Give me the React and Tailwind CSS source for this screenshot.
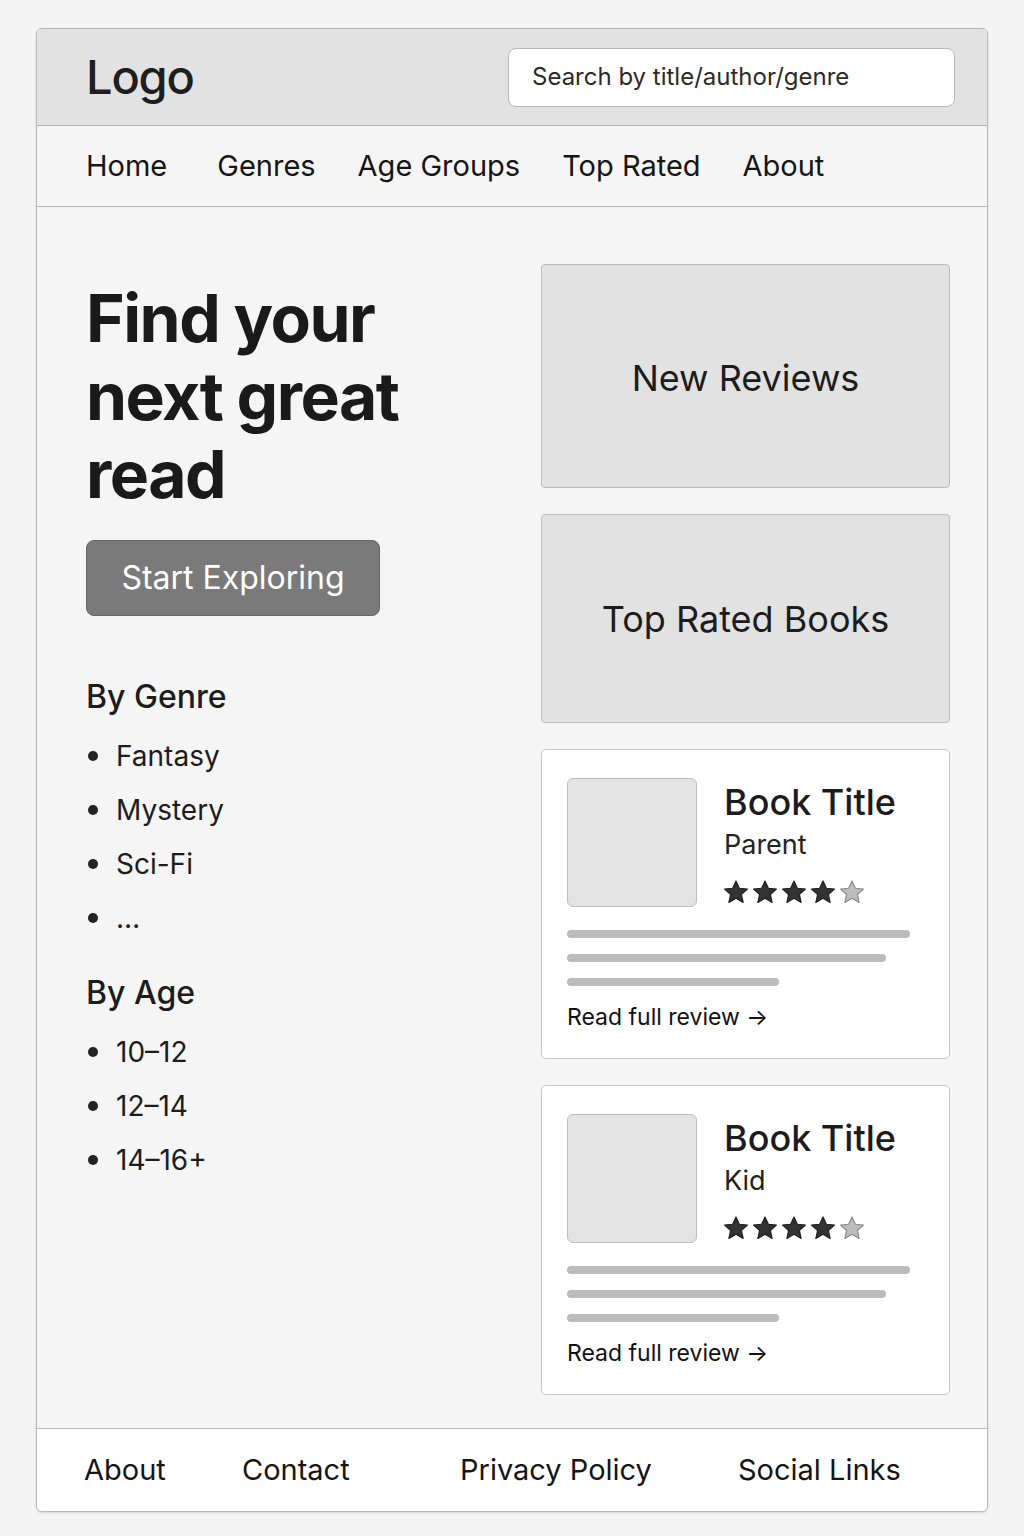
import React from 'react';

const navLinks = ['Home', 'Genres', 'Age Groups', 'Top Rated', 'About'];
const genres = ['Fantasy', 'Mystery', 'Sci-Fi', '…'];
const ages = ['10–12', '12–14', '14–16+'];
const reviews = [
  { title: 'Book Title', by: 'Parent', rating: 4 },
  { title: 'Book Title', by: 'Kid', rating: 4 },
];

const Star = ({ filled }) => (
  <svg viewBox="0 0 24 24" className="w-[28px] h-[28px]">
    <path
      d="M12 2.5l2.9 6.3 6.9.7-5.2 4.6 1.5 6.8L12 17.4l-6.1 3.5 1.5-6.8-5.2-4.6 6.9-.7z"
      fill={filled ? '#333333' : '#bdbdbd'}
      stroke={filled ? '#1f1f1f' : '#8a8a8a'}
      strokeWidth="1"
      strokeLinejoin="round"
    />
  </svg>
);

const ReviewCard = ({ review }) => (
  <div className="bg-white border border-[#c4c4c4] rounded-[5px] pt-[28px] pb-[26px] px-[25px]">
    <div className="flex">
      <div className="w-[130px] h-[129px] bg-[#e3e3e3] border border-[#bdbdbd] rounded-[6px] shrink-0" />
      <div className="ml-[27px] pt-[1px]">
        <p className="text-[36px] leading-[46px] font-medium text-[#1c1c1c]">{review.title}</p>
        <p className="text-[27px] leading-[36px] text-[#222] mt-[2px]">{review.by}</p>
        <div className="flex gap-[1px] mt-[15px] -ml-[2px]">
          {[0, 1, 2, 3, 4].map((i) => (
            <Star key={i} filled={i < review.rating} />
          ))}
        </div>
      </div>
    </div>
    {/* text placeholder lines */}
    <div className="mt-[23px] flex flex-col gap-[16px]">
      <div className="h-[8px] w-[343px] bg-[#bcbcbc] rounded-full" />
      <div className="h-[8px] w-[319px] bg-[#bcbcbc] rounded-full" />
      <div className="h-[8px] w-[212px] bg-[#bcbcbc] rounded-full" />
    </div>
    <p className="mt-[16px] text-[23px] leading-[30px] text-[#111]">Read full review →</p>
  </div>
);

const BulletList = ({ items }) => (
  <ul className="mt-[10px] flex flex-col">
    {items.map((item) => (
      <li key={item} className="flex items-center h-[54px] text-[28px] text-[#1c1c1c]">
        <span className="w-[10px] h-[10px] rounded-full bg-[#222] ml-[2px] mr-[18px]" />
        {item}
      </li>
    ))}
  </ul>
);

export default function App() {
  return (
    <div
      className="min-h-[1536px] bg-[#f4f4f4] pt-[28px] px-[36px]"
      style={{ fontFamily: 'Inter, "Noto Sans", sans-serif' }}
    >
      <div className="border border-[#b9b9b9] rounded-[6px] overflow-hidden bg-[#f5f5f5] shadow-sm">
        {/* Header */}
        <header className="h-[97px] bg-[#e2e2e2] border-b border-[#b5b5b5] flex items-center pl-[49px] pr-[32px]">
          <span className="text-[47px] font-medium text-[#1e1e1e] tracking-tight">Logo</span>
          <div className="ml-auto w-[447px] h-[59px] bg-white border border-[#b9b9b9] rounded-[8px] flex items-center px-[23px] text-[24px] text-[#2a2a2a]">
            Search by title/author/genre
          </div>
        </header>

        {/* Nav */}
        <nav className="h-[81px] border-b border-[#b9b9b9] flex items-center pl-[49px] gap-[42px] text-[29px] text-[#151515]">
          {navLinks.map((l, i) => (
            <a key={l} className={i === 0 ? 'mr-[8px]' : ''}>{l}</a>
          ))}
        </nav>

        {/* Main */}
        <main className="flex pl-[49px] pr-[37px] pt-[57px] pb-[33px]">
          <div className="flex-1">
            <h1 className="mt-[15px] text-[66px] leading-[78px] font-bold tracking-[-1.5px] text-[#1a1a1a]">
              Find your<br />next great<br />read
            </h1>
            <button className="mt-[27px] w-[294px] h-[76px] bg-[#7a7a7a] border border-[#666] rounded-[8px] text-white text-[32px]">
              Start Exploring
            </button>
            <h2 className="mt-[59px] text-[32px] leading-[44px] font-medium text-[#1c1c1c]">By Genre</h2>
            <BulletList items={genres} />
            <h2 className="mt-[26px] text-[32px] leading-[44px] font-medium text-[#1c1c1c]">By Age</h2>
            <BulletList items={ages} />
          </div>

          <div className="w-[409px] flex flex-col gap-[26px]">
            <div className="h-[224px] bg-[#e2e2e2] border border-[#bdbdbd] rounded-[4px] flex items-center justify-center text-[36px] text-[#1c1c1c] pt-[4px]">
              New Reviews
            </div>
            <div className="h-[209px] bg-[#e2e2e2] border border-[#bdbdbd] rounded-[4px] flex items-center justify-center text-[36px] text-[#1c1c1c]">
              Top Rated Books
            </div>
            {reviews.map((r, i) => (
              <ReviewCard key={i} review={r} />
            ))}
          </div>
        </main>

        {/* Footer */}
        <footer className="h-[83px] bg-white border-t border-[#b9b9b9] flex items-center pl-[47px] text-[29px] text-[#151515]">
          <a className="w-[158px]">About</a>
          <a className="w-[218px]">Contact</a>
          <a className="w-[278px]">Privacy Policy</a>
          <a>Social Links</a>
        </footer>
      </div>
    </div>
  );
}
